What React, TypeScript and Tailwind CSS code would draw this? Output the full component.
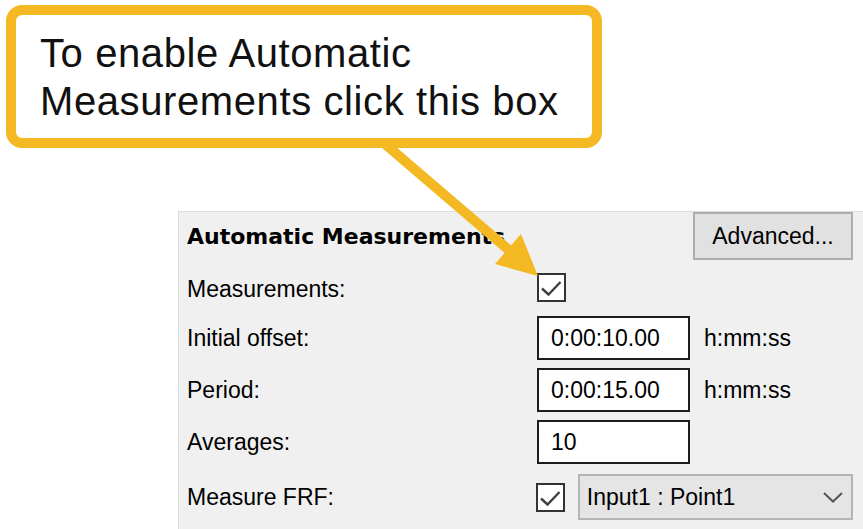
import React from 'react';

const Check = () => (
  <svg width="25" height="25" viewBox="0 0 25 25" className="block">
    <path d="M3 13.5 L9.5 19.5 L21.5 7" fill="none" stroke="#404040" strokeWidth="2.4" />
  </svg>
);

function CheckBox() {
  return (
    <div className="w-[29px] h-[29px] border-2 border-[#333333] bg-white flex items-center justify-center">
      <Check />
    </div>
  );
}

function TextBox({ value }: { value: string }) {
  return (
    <div className="w-[153px] h-[44px] border-2 border-[#1e1e1e] bg-white pl-[12px] flex items-center">
      {value}
    </div>
  );
}

export default function App() {
  return (
    <div className="relative w-[863px] h-[529px] overflow-hidden bg-white font-['Liberation_Sans',Arial,sans-serif] text-black">
      {/* Callout */}
      <div className="ml-[6px] pt-[5px]">
        <div className="w-[596px] h-[143px] border-[10px] border-[#f4b922] rounded-[16px] bg-white pl-[24px] pt-[14px] text-[40px] leading-[48px] tracking-[0.6px] text-[#111111]">
          <div>To enable Automatic</div>
          <div>Measurements click this box</div>
        </div>
      </div>

      {/* Panel */}
      <div className="ml-[178px] mt-[63px] h-[400px] border-l border-t border-[#dadada] bg-[#f0f0f0] pl-[8px] pr-[10px] text-[23px]">
        <div className="flex justify-between items-center h-[48px]">
          <span className="font-['DejaVu_Sans',sans-serif] font-bold text-[22px]">Automatic Measurements</span>
          <button className="w-[160px] h-[48px] border-2 border-[#adadad] bg-[#e1e1e1] text-[23px]">Advanced...</button>
        </div>

        <div className="flex items-center h-[29px] mt-[13px]">
          <span className="w-[350px] pt-[3px]">Measurements:</span>
          <CheckBox />
        </div>

        <div className="flex items-center h-[44px] mt-[14px]">
          <span className="w-[350px]">Initial offset:</span>
          <TextBox value="0:00:10.00" />
          <span className="ml-[14px]">h:mm:ss</span>
        </div>

        <div className="flex items-center h-[44px] mt-[8px]">
          <span className="w-[350px]">Period:</span>
          <TextBox value="0:00:15.00" />
          <span className="ml-[14px]">h:mm:ss</span>
        </div>

        <div className="flex items-center h-[44px] mt-[8px]">
          <span className="w-[350px]">Averages:</span>
          <TextBox value="10" />
        </div>

        <div className="flex items-center h-[46px] mt-[10px]">
          <span className="w-[350px]">Measure FRF:</span>
          <CheckBox />
          <div className="ml-[13px] w-[276px] h-[46px] border-2 border-[#b4b4b4] bg-[#e5e5e5] pl-[7px] pr-[8px] flex items-center justify-between">
            <span>Input1 : Point1</span>
            <svg width="20" height="12" viewBox="0 0 20 12">
              <path d="M1 2 L10 10.5 L19 2" fill="none" stroke="#555555" strokeWidth="2" />
            </svg>
          </div>
        </div>
      </div>

      {/* Arrow */}
      <svg className="absolute inset-0 pointer-events-none" width="863" height="529" viewBox="0 0 863 529">
        <line x1="385" y1="144" x2="510" y2="251" stroke="#f4b922" strokeWidth="10" />
        <polygon points="538,276 495,264 521,234" fill="#f4b922" />
      </svg>
    </div>
  );
}
